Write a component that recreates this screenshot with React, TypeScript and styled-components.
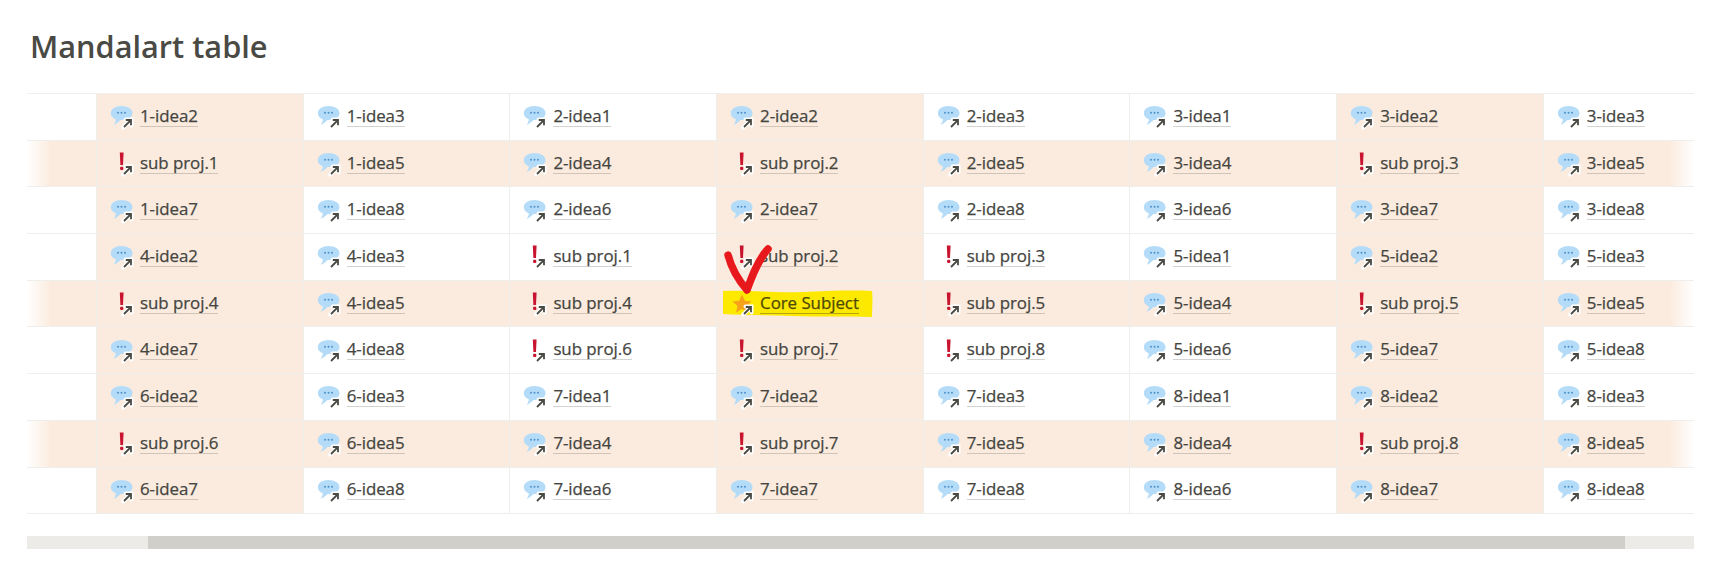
import React from "react";
import styled, { createGlobalStyle } from "styled-components";

const Global = createGlobalStyle`
  html, body { margin: 0; padding: 0; background: #fff; }
  body { font-family: "Open Sans", "Noto Sans", "Liberation Sans", sans-serif; color: #37352f; }
`;

const Page = styled.main`
  position: relative;
  width: 1713px;
  height: 573px;
  padding: 27px 19px 0 27px;
  box-sizing: border-box;
  overflow: hidden;
`;

const Title = styled.h1`
  margin: -1px 0 1px 3px;
  height: 66px;
  font-size: 30.7px;
  line-height: 40px;
  font-weight: 600;
  color: #4a4a45;
`;

const Table = styled.div`
  border-top: 1px solid #eeeeec;
  overflow: hidden;
`;

const Row = styled.div<{ $hot: boolean }>`
  display: grid;
  grid-template-columns: 69px repeat(7, 206.7px) 1fr;
  height: 46.7px;
  box-sizing: border-box;
  border-bottom: 1px solid #eeeeec;
  background: ${(p) =>
    p.$hot
      ? "linear-gradient(90deg, #fff 0, #fbebde 24px, #fbebde calc(100% - 24px), #fff 100%)"
      : "transparent"};
`;

const Spacer = styled.div``;

const Cell = styled.div<{ $hot: boolean }>`
  position: relative;
  display: flex;
  align-items: center;
  padding: 0 0 0 13px;
  box-sizing: border-box;
  border-left: 1px solid #eeeeec;
  white-space: nowrap;
  background: ${(p) => (p.$hot ? "#fbebde" : "transparent")};
`;

const PageLink = styled.a`
  position: relative;
  display: flex;
  align-items: center;
  gap: 5px;
  color: inherit;
  text-decoration: none;
`;

const IconBox = styled.span`
  display: block;
  width: 25px;
  height: 25px;
  margin-top: 2px;
  flex: none;
`;

const Label = styled.span<{ $marked: boolean }>`
  margin-bottom: 2px;
  font-size: 16.9px;
  line-height: 21px;
  font-weight: 500;
  letter-spacing: -0.05px;
  -webkit-text-stroke: 0.25px currentColor;
  color: ${(p) => (p.$marked ? "#4f4a06" : "#45453f")};
  border-bottom: 1px solid ${(p) => (p.$marked ? "rgba(90, 80, 40, 0.45)" : "rgba(55, 53, 47, 0.22)")};
`;

const ScrollTrack = styled.div`
  margin-top: 22px;
  height: 13px;
  background: #ecebe7;
  padding-left: 121px;
  padding-right: 69px;
`;

const ScrollThumb = styled.div`
  height: 100%;
  background: #d0cfca;
`;

const Highlight = styled.svg`
  position: absolute;
  left: 5px;
  top: 8px;
  width: 151px;
  height: 29px;
`;

const Check = styled.svg`
  position: absolute;
  left: 715px;
  top: 240px;
  width: 70px;
  height: 70px;
  pointer-events: none;
`;

type Kind = "idea" | "sub" | "core";

const Arrow = () => (
  <>
    <path d="M13.2 22.5 L21.5 14.5 M15.5 14.5 H21.5 V20.5" fill="none" stroke="#fff" strokeWidth="4" strokeLinecap="round" />
    <path d="M14 22 L21 15 M15.8 15 H21 V20.2" fill="none" stroke="#4a4a45" strokeWidth="1.8" />
  </>
);

const Icon = ({ kind }: { kind: Kind }) => (
  <IconBox>
    <svg width="25" height="25" viewBox="0 0 25 25">
      {kind === "idea" && (
        <>
          <path
            d="M11.5 1 C17.8 1 22.5 4 22.5 8.3 C22.5 12.6 17.8 15 12.5 15 L10.5 15 C8.5 17 6.5 18.8 3.5 19.8 C5 18 5.8 16 5.8 14.2 C2.6 13.2 0.8 11 0.8 8.3 C0.8 4 5.3 1 11.5 1 Z"
            fill="#b4dcf9"
          />
          <circle cx="8" cy="7.8" r="0.95" fill="#4a8ec8" />
          <circle cx="11.5" cy="7.8" r="0.95" fill="#4a8ec8" />
          <circle cx="15" cy="7.8" r="0.95" fill="#4a8ec8" />
        </>
      )}
      {kind === "sub" && (
        <>
          <path d="M9.8 0.5 H13.6 L13 13 H10.4 Z" fill="#c8142f" />
          <rect x="10.1" y="14.8" width="3.2" height="3.2" rx="1" fill="#c8142f" />
        </>
      )}
      {kind === "core" && (
        <path d="M12 2.5 L14.8 8.7 L21.5 9.5 L16.5 13.9 L18 20.5 L12 17.1 L6 20.5 L7.5 13.9 L2.5 9.5 L9.2 8.7 Z" fill="#f7a21b" />
      )}
      <Arrow />
    </svg>
  </IconBox>
);

const rows: string[][] = [
  ["1-idea2", "1-idea3", "2-idea1", "2-idea2", "2-idea3", "3-idea1", "3-idea2", "3-idea3"],
  ["sub proj.1", "1-idea5", "2-idea4", "sub proj.2", "2-idea5", "3-idea4", "sub proj.3", "3-idea5"],
  ["1-idea7", "1-idea8", "2-idea6", "2-idea7", "2-idea8", "3-idea6", "3-idea7", "3-idea8"],
  ["4-idea2", "4-idea3", "sub proj.1", "sub proj.2", "sub proj.3", "5-idea1", "5-idea2", "5-idea3"],
  ["sub proj.4", "4-idea5", "sub proj.4", "Core Subject", "sub proj.5", "5-idea4", "sub proj.5", "5-idea5"],
  ["4-idea7", "4-idea8", "sub proj.6", "sub proj.7", "sub proj.8", "5-idea6", "5-idea7", "5-idea8"],
  ["6-idea2", "6-idea3", "7-idea1", "7-idea2", "7-idea3", "8-idea1", "8-idea2", "8-idea3"],
  ["sub proj.6", "6-idea5", "7-idea4", "sub proj.7", "7-idea5", "8-idea4", "sub proj.8", "8-idea5"],
  ["6-idea7", "6-idea8", "7-idea6", "7-idea7", "7-idea8", "8-idea6", "8-idea7", "8-idea8"],
];

const kindOf = (t: string): Kind =>
  t.startsWith("sub") ? "sub" : t.startsWith("Core") ? "core" : "idea";

export default function App() {
  return (
    <Page>
      <Global />
      <Title>Mandalart table</Title>
      <Table>
        {rows.map((row, r) => (
          <Row key={r} $hot={r % 3 === 1}>
            <Spacer />
            {row.map((text, c) => (
              <Cell key={c} $hot={c % 3 === 0}>
                {kindOf(text) === "core" && (
                  <Highlight viewBox="0 0 151 29">
                    <path
                      d="M1 2 C30 1 50 4 80 3 C105 2 125 1 150 2 C151 10 150 20 150 28 C120 27 100 28 70 27 C45 26 20 26 1 25 Z"
                      fill="#fde800"
                    />
                  </Highlight>
                )}
                <PageLink>
                  <Icon kind={kindOf(text)} />
                  <Label $marked={kindOf(text) === "core"}>{text}</Label>
                </PageLink>
              </Cell>
            ))}
          </Row>
        ))}
      </Table>
      <ScrollTrack>
        <ScrollThumb />
      </ScrollTrack>
      <Check viewBox="0 0 70 70">
        <path
          d="M13 15 C17 30 25 42 32 50 C37 36 43 20 53 9"
          fill="none"
          stroke="#e8191c"
          strokeWidth="7.5"
          strokeLinecap="round"
          strokeLinejoin="round"
        />
      </Check>
    </Page>
  );
}
